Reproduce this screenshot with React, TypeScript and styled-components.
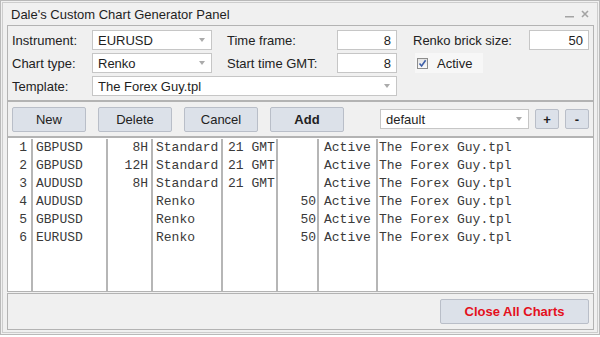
import styled, { createGlobalStyle } from 'styled-components';

const GlobalStyle = createGlobalStyle`
  * {
    box-sizing: border-box;
  }
  body {
    margin: 0;
    background: #ffffff;
    font-family: 'Liberation Sans', Arial, sans-serif;
  }
`;

const Window = styled.div`
  width: 600px;
  height: 335px;
  border: 1px solid #b9b9b9;
  padding: 1px;
  background: #f0f0f0;
`;

const Frame = styled.div`
  height: 100%;
  border: 1px solid #cdcdcd;
  padding: 0 3px 2px 4px;
  display: flex;
  flex-direction: column;
`;

const TitleBar = styled.div`
  height: 22px;
  display: flex;
  align-items: center;
  padding-left: 4px;
  font-size: 13px;
  color: #1e1e1e;
`;

const TitleText = styled.span`
  flex: 1;
`;

const TitleIcons = styled.div`
  display: flex;
  align-items: center;
  gap: 7px;
  padding-right: 5px;
  color: #a4a4a4;
`;

const Panel = styled.div<{ $py?: number }>`
  border: 1px solid #b3b3b3;
  padding: ${(p) => p.$py ?? 4}px 4px;
`;

const SettingsGrid = styled.div`
  display: grid;
  grid-template-columns: 80px 120px 125px 60px 132px 60px;
  grid-auto-rows: 20px;
  row-gap: 3px;
  margin-right: -2px;
`;

const Label = styled.div<{ $indent?: number }>`
  display: flex;
  align-items: center;
  padding-left: ${(p) => p.$indent ?? 0}px;
  font-size: 13px;
  color: #222;
`;

const Combo = styled.div<{ $span?: number; $w?: number }>`
  grid-column: span ${(p) => p.$span ?? 1};
  width: ${(p) => (p.$w ? `${p.$w}px` : 'auto')};
  height: 20px;
  background: #fff;
  border: 1px solid #c6c6c6;
  display: flex;
  align-items: center;
  justify-content: space-between;
  padding: 0 6px 0 5px;
  font-size: 13px;
  color: #1e1e1e;
`;

const Arrow = styled.span`
  width: 0;
  height: 0;
  border-left: 3.5px solid transparent;
  border-right: 3.5px solid transparent;
  border-top: 4px solid #ababab;
`;

const NumberInput = styled.div`
  height: 20px;
  background: #fff;
  border: 1px solid #c6c6c6;
  display: flex;
  align-items: center;
  justify-content: flex-end;
  padding-right: 5px;
  font-size: 13px;
  color: #1e1e1e;
`;

const CheckLabel = styled.div`
  display: flex;
  align-items: center;
  gap: 9px;
  margin-left: 18px;
  width: 68px;
  height: 20px;
  padding-left: 2px;
  background: #f7f7f7;
  font-size: 13px;
  color: #222;
`;

const CheckBox = styled.span`
  width: 11px;
  height: 11px;
  border: 1px solid #8d8d8d;
  background: linear-gradient(#e4e4e4, #fafafa);
  display: flex;
  align-items: center;
  justify-content: center;
`;

const ToolRow = styled.div`
  display: flex;
  align-items: center;
  gap: 12px;
  height: 26px;
`;

const Button = styled.button<{ $w?: number; $bold?: boolean; $danger?: boolean }>`
  width: ${(p) => p.$w ?? 74}px;
  height: ${(p) => (p.$w && p.$w < 30 ? 20 : 25)}px;
  background: #dce1e9;
  border: 1px solid #b9bec8;
  border-radius: 2px;
  font-family: 'Liberation Sans', Arial, sans-serif;
  font-size: 13px;
  font-weight: ${(p) => (p.$bold ? 700 : 400)};
  color: ${(p) => (p.$danger ? '#e4101c' : '#222')};
  padding: 0;
`;

const TemplateSet = styled.div`
  margin-left: auto;
  display: flex;
  align-items: center;
  gap: 6px;
`;

const Table = styled.div`
  flex: 1;
  margin-bottom: 1px;
  border: 1px solid #b3b3b3;
  background: #fff;
  display: flex;
  padding-top: 1px;
`;

const Column = styled.div<{ $w?: number; $right?: boolean; $pl?: number; $pr?: number }>`
  width: ${(p) => (p.$w ? `${p.$w}px` : 'auto')};
  flex: ${(p) => (p.$w ? 'none' : 1)};
  border-right: ${(p) => (p.$w ? '2px solid #b6b6b6' : 'none')};
  text-align: ${(p) => (p.$right ? 'right' : 'left')};
  padding-left: ${(p) => p.$pl ?? 0}px;
  padding-right: ${(p) => p.$pr ?? 0}px;
`;

const Cell = styled.div`
  height: 18px;
  line-height: 18px;
  font-family: 'Liberation Mono', 'Courier New', monospace;
  font-size: 13px;
  color: #3a3a3a;
  white-space: pre;
`;

const Footer = styled.div`
  display: flex;
  justify-content: flex-end;
`;

const columns = [
  { w: 25, right: true, pr: 4 },
  { w: 75, pl: 3 },
  { w: 45, right: true, pr: 3 },
  { w: 70, pl: 3 },
  { w: 55, pl: 5 },
  { w: 41, right: true, pr: 1 },
  { w: 59, pl: 5 },
  { pl: 1 },
];

const rows = [
  ['1', 'GBPUSD', '8H', 'Standard', '21 GMT', '', 'Active', 'The Forex Guy.tpl'],
  ['2', 'GBPUSD', '12H', 'Standard', '21 GMT', '', 'Active', 'The Forex Guy.tpl'],
  ['3', 'AUDUSD', '8H', 'Standard', '21 GMT', '', 'Active', 'The Forex Guy.tpl'],
  ['4', 'AUDUSD', '', 'Renko', '', '50', 'Active', 'The Forex Guy.tpl'],
  ['5', 'GBPUSD', '', 'Renko', '', '50', 'Active', 'The Forex Guy.tpl'],
  ['6', 'EURUSD', '', 'Renko', '', '50', 'Active', 'The Forex Guy.tpl'],
];

export default function App() {
  return (
    <>
      <GlobalStyle />
      <Window>
        <Frame>
          <TitleBar>
            <TitleText>Dale's Custom Chart Generator Panel</TitleText>
            <TitleIcons>
              <svg width='9' height='9' viewBox='0 0 9 9'>
                <rect x='0' y='6' width='9' height='1.5' fill='currentColor' />
              </svg>
              <svg width='8' height='8' viewBox='0 0 8 8'>
                <path d='M1 1 L7 7 M7 1 L1 7' stroke='currentColor' strokeWidth='1.6' />
              </svg>
            </TitleIcons>
          </TitleBar>

          <Panel>
            <SettingsGrid>
              <Label>Instrument:</Label>
              <Combo>
                EURUSD
                <Arrow />
              </Combo>
              <Label $indent={15}>Time frame:</Label>
              <NumberInput>8</NumberInput>
              <Label $indent={16}>Renko brick size:</Label>
              <NumberInput>50</NumberInput>

              <Label>Chart type:</Label>
              <Combo>
                Renko
                <Arrow />
              </Combo>
              <Label $indent={15}>Start time GMT:</Label>
              <NumberInput>8</NumberInput>
              <CheckLabel>
                <CheckBox>
                  <svg width='9' height='9' viewBox='0 0 9 9'>
                    <path d='M1.5 4.5 L3.6 7 L7.6 1.2' fill='none' stroke='#3d5fa8' strokeWidth='1.6' />
                  </svg>
                </CheckBox>
                Active
              </CheckLabel>
              <span />

              <Label>Template:</Label>
              <Combo $span={3}>
                The Forex Guy.tpl
                <Arrow />
              </Combo>
            </SettingsGrid>
          </Panel>

          <Panel>
            <ToolRow>
              <Button>New</Button>
              <Button>Delete</Button>
              <Button>Cancel</Button>
              <Button $bold>Add</Button>
              <TemplateSet>
                <Combo $w={149}>
                  default
                  <Arrow />
                </Combo>
                <Button $w={24} $bold>
                  +
                </Button>
                <Button $w={24} $bold>
                  -
                </Button>
              </TemplateSet>
            </ToolRow>
          </Panel>

          <Table>
            {columns.map((c, ci) => (
              <Column key={ci} $w={c.w} $right={c.right} $pl={c.pl} $pr={c.pr}>
                {rows.map((r, ri) => (
                  <Cell key={ri}>{r[ci]}</Cell>
                ))}
              </Column>
            ))}
          </Table>

          <Panel $py={5}>
            <Footer>
              <Button $w={149} $bold $danger>
                Close All Charts
              </Button>
            </Footer>
          </Panel>
        </Frame>
      </Window>
    </>
  );
}
